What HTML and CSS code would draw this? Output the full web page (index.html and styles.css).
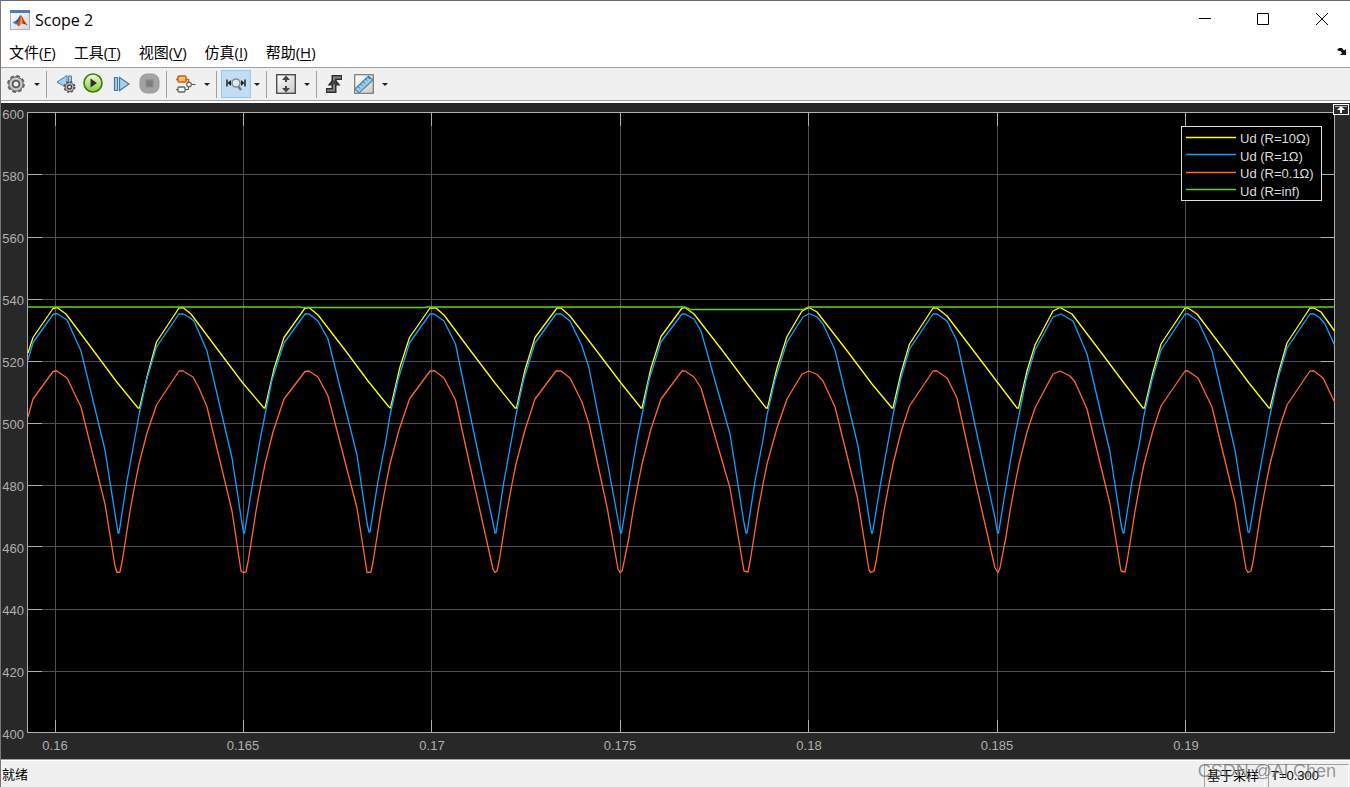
FILE: index.html
```html
<!DOCTYPE html>
<html lang="zh-CN">
<head>
<meta charset="utf-8">
<title>Scope 2</title>
<link rel="stylesheet" href="styles.css">
</head>
<body>
<div class="window">
  <header class="titlebar">
    <svg class="app-icon" width="20" height="20" viewBox="0 0 20 20" aria-hidden="true">
      <defs><linearGradient id="appbg" x1="0" y1="0" x2="1" y2="1"><stop offset="0" stop-color="#fff"/><stop offset="1" stop-color="#d3d6da"/></linearGradient></defs>
      <rect x=".5" y=".5" width="19" height="19" fill="url(#appbg)" stroke="#a9b2bc"/>
      <rect width="20" height="3" fill="#4d7fb0"/>
      <path d="M2.500 12.500L6 10.500 8.500 12 6 14.500z" fill="#3f82bd"/>
      <path d="M6 10.500C8 9.800 9 6 10.500 5L11 12 8.500 15 6.500 14z" fill="#355f94"/>
      <path d="M10.500 5C9.800 9 9 12 6.500 14.500L9 16.500C10.500 15 11 13.500 12 13.500L17.500 15C14 12 13 6 10.500 5z" fill="#d9541c"/>
      <path d="M11 6C11 10 10.500 13 9 15.500 10.500 14 11 13 12 13.200 12.500 11 12 8 11 6z" fill="#f6a13a"/>
      <path d="M11.300 5.500C13 9 13.500 12 17.500 15L13.500 13.600C13 11 12.500 8 11.300 5.500z" fill="#9c2d16"/>
    </svg>
    <h1 class="title">Scope 2</h1>
    <div class="controls">
      <button class="control" aria-label="最小化"><svg width="14" height="14" viewBox="0 0 14 14"><path d="M1 5.500H13"/></svg></button>
      <button class="control" aria-label="最大化"><svg width="14" height="14" viewBox="0 0 14 14"><path d="M1.500 .5H12.500V11.500H1.500z"/></svg></button>
      <button class="control" aria-label="关闭"><svg width="14" height="14" viewBox="0 0 14 14"><path d="M2 0L14 12M14 0L2 12"/></svg></button>
    </div>
  </header>

  <nav class="menubar">
    <button class="menu">文件(<u>F</u>)</button>
    <button class="menu">工具(<u>T</u>)</button>
    <button class="menu">视图(<u>V</u>)</button>
    <button class="menu">仿真(<u>I</u>)</button>
    <button class="menu">帮助(<u>H</u>)</button>
    <button class="dock" aria-label="停靠"><svg width="10" height="9" viewBox="0 0 10 9"><path d="M0 3L2 1H5L7 3.500 9 2V8H3L5 6 3.500 4H2z" fill="#111"/></svg></button>
  </nav>

  <div class="toolbar" role="toolbar">
    <button class="tool" aria-label="配置属性"><svg width="20" height="20" viewBox="0 0 20 20">
      <circle cx="10" cy="10" r="7.800" fill="none" stroke="#6a6a6a" stroke-width="2.200" stroke-dasharray="3.600 2.530"/>
      <circle cx="10" cy="10" r="7.200" fill="#b4b4b4" stroke="#5c5c5c"/>
      <circle cx="10" cy="10" r="5.500" fill="none" stroke="#d8d8d8"/>
      <circle cx="10" cy="10" r="3.300" fill="#eee" stroke="#505050" stroke-width="1.600"/></svg></button>
    <button class="caret" aria-label="配置选项"></button>
    <span class="sep"></span>
    <button class="tool" aria-label="单步后退"><svg width="20" height="20" viewBox="0 0 20 20">
      <path d="M1 8L11 1.500V14z" fill="#a8cfe9" stroke="#4f80a4"/><path d="M12.500 2H15.500V9H12.500z" fill="#a8cfe9" stroke="#4f80a4"/>
      <circle cx="13.500" cy="13" r="5" fill="none" stroke="#555" stroke-width="2" stroke-dasharray="2.200 1.727"/>
      <circle cx="13.500" cy="13" r="4.500" fill="#c2c2c2" stroke="#555"/><circle cx="13.500" cy="13" r="2" fill="#eee" stroke="#444" stroke-width="1.400"/></svg></button>
    <button class="tool" aria-label="运行"><svg width="22" height="22" viewBox="0 0 22 22">
      <defs><linearGradient id="run" x1="0" y1="0" x2="0" y2="1"><stop offset="0" stop-color="#f4fbd7"/><stop offset="1" stop-color="#8bcb36"/></linearGradient></defs>
      <circle cx="10" cy="10" r="9" fill="url(#run)" stroke="#3f7a1c" stroke-width="1.700"/><path d="M7.500 5.500L14 10 7.500 14.500z" fill="#303030"/></svg></button>
    <button class="tool" aria-label="单步前进"><svg width="20" height="20" viewBox="0 0 20 20">
      <path d="M2.500 3.500H5.500V16.500H2.500zM7.500 3.500L17 10 7.500 16.500z" fill="#a8cfe9" stroke="#4679a3" stroke-width="1.200"/></svg></button>
    <button class="tool" aria-label="停止" disabled><svg width="22" height="22" viewBox="0 0 22 22">
      <rect x="1" y="1" width="19" height="19" rx="7" fill="#a3a3a3" stroke="#999"/><rect x="7" y="7" width="7" height="7" fill="#7d7d7d" stroke="#8d8d8d"/></svg></button>
    <span class="sep"></span>
    <button class="tool" aria-label="信号选择"><svg width="22" height="20" viewBox="0 0 22 20">
      <path d="M1 15.500H13.500V12M16 10.500H20.500" fill="none" stroke="#555"/>
      <path d="M1 5.500H13.500V9" fill="none" stroke="#d95b16" stroke-width="1.500"/>
      <rect x="3" y="2" width="8" height="6" rx="1" fill="#ffc46b" stroke="#d95b16" stroke-width="1.500"/>
      <rect x="3" y="13" width="7" height="5" rx="1" fill="#f4f4f4" stroke="#666" stroke-width="1.300"/>
      <circle cx="14" cy="10.500" r="2.300" fill="#f2f2f2" stroke="#666" stroke-width="1.200"/></svg></button>
    <button class="caret" aria-label="信号选项"></button>
    <span class="sep"></span>
    <button class="tool tool-active" aria-label="缩放 X" aria-pressed="true"><svg width="22" height="20" viewBox="0 0 22 20">
      <path d="M2 5.500V12.500M20 5.500V12.500" stroke="#222" stroke-width="1.500"/><path d="M2.500 9L6 6V12zM19.500 9L16 6V12z" fill="#222"/>
      <path d="M13 12L16 16" stroke="#777" stroke-width="2.400"/><circle cx="11" cy="9" r="4" fill="#d9ecf8" stroke="#8b8b8b" stroke-width="1.600"/></svg></button>
    <button class="caret" aria-label="缩放选项"></button>
    <span class="sep"></span>
    <button class="tool" aria-label="缩放 Y 轴范围"><svg width="20" height="20" viewBox="0 0 20 20">
      <defs><linearGradient id="box" x1="0" y1="0" x2="1" y2="1"><stop offset="0" stop-color="#fff"/><stop offset="1" stop-color="#c9c9c9"/></linearGradient></defs>
      <rect x=".7" y=".7" width="18.600" height="18.600" fill="url(#box)" stroke="#4d4d4d" stroke-width="1.400"/>
      <path d="M10 1.500L14 6H11V8H9V6H6zM10 18.500L6 14H9V12H11V14H14z" fill="#444"/></svg></button>
    <button class="caret" aria-label="范围选项"></button>
    <span class="sep"></span>
    <button class="tool" aria-label="触发器"><svg width="20" height="20" viewBox="0 0 20 20">
      <path d="M0 16.500H8V3.500H16" fill="none" stroke="#2c2c2c" stroke-width="5"/>
      <path d="M8 3.500L14.500 11.500H1.500z" fill="#2c2c2c"/>
      <path d="M1 16.500H8V3.500H15" fill="none" stroke="#858585" stroke-width="2"/>
      <path d="M8 6L12 10.500H4z" fill="#444"/></svg></button>
    <button class="tool" aria-label="游标测量"><svg width="20" height="20" viewBox="0 0 20 20">
      <rect x=".7" y=".7" width="18.600" height="18.600" fill="url(#box)" stroke="#777" stroke-width="1.200"/>
      <path d="M1 15L14.500 2 19 6 5 19z" fill="#9bcbe8" stroke="#4f86aa" stroke-width="1.200"/>
      <path d="M4 12.500L6 14.500M6.500 10L8 11.500M9 7.500L11 9.500M11.500 5L13 6.500M14 3L16 5" stroke="#2f6185"/></svg></button>
    <button class="caret" aria-label="测量选项"></button>
  </div>

  <main class="scope">
    <svg class="plot" viewBox="1 103 1349 656" role="img" aria-label="Ud">
      <rect x="27.500" y="112.500" width="1307" height="620" class="axes"/>
      <path class="grid" d="M28 174.500H1334M28 237.500H1334M28 299.500H1334M28 361.500H1334M28 423.500H1334M28 485.500H1334M28 546.500H1334M28 609.500H1334M28 671.500H1334M55.500 113V732M243.500 113V732M431.500 113V732M620.500 113V732M808.500 113V732M997.500 113V732M1185.500 113V732"/>
      <path class="ticks" d="M28 174.500H42M28 237.500H42M28 299.500H42M28 361.500H42M28 423.500H42M28 485.500H42M28 546.500H42M28 609.500H42M28 671.500H42M1321 174.500H1334M1321 237.500H1334M1321 299.500H1334M1321 361.500H1334M1321 423.500H1334M1321 485.500H1334M1321 546.500H1334M1321 609.500H1334M1321 671.500H1334M55.500 113V126M243.500 113V126M431.500 113V126M620.500 113V126M808.500 113V126M997.500 113V126M1185.500 113V126M55.500 720V732M243.500 720V732M431.500 720V732M620.500 720V732M808.500 720V732M997.500 720V732M1185.500 720V732"/>
      <g class="y-labels">
        <text x="24" y="119">600</text><text x="24" y="181">580</text><text x="24" y="243">560</text><text x="24" y="305">540</text><text x="24" y="367">520</text><text x="24" y="429">500</text><text x="24" y="491">480</text><text x="24" y="553">460</text><text x="24" y="615">440</text><text x="24" y="677">420</text><text x="24" y="739">400</text>
      </g>
      <g class="x-labels">
        <text x="55" y="750">0.16</text><text x="243" y="750">0.165</text><text x="432" y="750">0.17</text><text x="620" y="750">0.175</text><text x="809" y="750">0.18</text><text x="997" y="750">0.185</text><text x="1186" y="750">0.19</text>
      </g>
      <polyline class="trace yellow" points="28,353 33,337.500 53,308.500 57,307.500 66,314 93,350 116,381 138,408 139.500,408 148,373 156.500,342 179,308 183,307.500 191,314 218,350 242,382 264,408 265,408 274,369 284,337.500 305,308 309,307.500 318,315 345,350 368,381 389,407 390.500,408 400,367 409.500,337.500 430,308 436,308 444,315 470,350 495,383 515,408 516.500,408 525,370 535,337.500 557,308 561,308 570,316 596,350 621,383 641,408 642,408 651,368 661,336.500 682,308 685,307.500 694,314 722,350 746,382 766,408 767.500,408 777,368 787,336.500 802,311 809,307.500 817,312 848,352 872,384 892,408 893,408 901,373 909.500,344 933,308 937,308 947,316 973,350 998,383 1017,408 1018.500,408 1027,371 1035,345 1053,311 1060,307.500 1072,314 1100,351 1124,383 1143,408 1144.500,408 1153,372 1161,344 1185,308 1188,308 1197,314 1225,351 1249,383 1269,408 1270,408 1279,371 1287,343 1310,308 1314,308 1321,312 1334.500,331"/>
      <polyline class="trace blue" points="28,360 33,342.500 53,314.500 57,313.500 67,320 81,351 105,450 118,533 119,533 127,481 134.500,440 139,415 146.500,380 156.500,347 179,314 183,314 189,317 194,321 207,351 232,458 243.500,533 244.500,533 253,481 260,440 265,415 272,380 284,343 305,314 309,314 318,321 328,339 357,455 367,523 369,532 370,532 378,481 386,440 390,415 398,380 409.500,343 430,314 434,314 444,321 455.500,344 475,438 493,523 495,533 496,533 504,481 511.500,440 516,415 523.500,380 535,343 556,314 561,314 570,321 582,346 589,368 607,460 619,525 620.500,533 621.500,533 630,481 637,440 642,415 649,380 661,342 682,314 685,314 694,319 701,331 730,434 744,523 746,533 747,533 755,481 763,440 767,415 775,380 787,342 803,317 809,313.500 817,317 823,324 835,350 858,446 870,524 871.500,533 872.500,533 881,481 888.500,440 893,415 900.500,380 909.500,349 933,314 937,314 947,321 957,341 975,425 995,518 997.500,533 998.500,533 1007,481 1014,440 1019,415 1026,380 1035,350 1053,317 1061,314 1073,321 1087,354 1110,452 1121,524 1123,533 1124,533 1132,481 1140,440 1144,415 1152,380 1161,350 1185,314 1188,314 1198,321 1212,351 1235,450 1248,532 1249.500,532 1258,481 1265.500,440 1270,415 1277.500,380 1287,348 1310,314 1314,314 1320,318 1325,324 1334.500,345"/>
      <polyline class="trace red" points="28,417 33,399 53,371.500 57,371 67,378 81,407 105,504 115,566 117,572.500 120,572 122,562 126,537 130,511 135,484 139,464 147,433 156.500,405 179,371 183,371 193,377 199,388 207,407 232,511 241,571 243,572.500 246,572 248,562 252,537 256,511 261,484 265,464 273,432 284,399 305,371.500 309,371 318,377 328,396 357,508 367,572.500 371,572 373,562 377,537 381,511 386,484 390,464 399,430 409.500,399 430,371 435,371 444,378 455.500,400 472,475 493,569 495,572.500 497,571 499,562 503,537 507,511 512,484 516,464 525,430 535,399 556,371 561,371 570,378 582,402 589,424 607,507 618,569 620,572.500 622,571 624,562 629,537 633,511 638,484 642,464 651,429 661,399 682,371 685,371 694,377 701,388 730,488 744,571 748,572 750,562 754,537 758,511 763,484 767,464 777,428 787,399 802,374 809,371 817,374.500 823,381 835,407 857.500,498 869,570 871,572.500 874,571 876,562 880,537 884,511 889,484 893,464 901,432 909.500,406 933,371 937,371 947,378 957,398 975,480 995,568 998,572.500 1000,568 1002,557 1006,537 1010,511 1015,484 1019,464 1027,432 1035,408 1053,374 1060,371 1070,376 1075,382 1087,409 1110,504 1121,571 1125,572 1127,562 1131,537 1135,511 1140,484 1144,464 1153,430 1161,406 1185,371 1188,371 1198,378 1212,407 1235,502 1246,569 1248,572.500 1251,571 1253,562 1257,537 1261,511 1266,484 1270,464 1279,429 1287,405 1310,371 1314,371 1323,378 1334.500,402"/>
      <polyline class="trace green" points="28,307 300,307 302,307.500 425,307.500 427,307 685,307 691,309.500 803,309.500 808,307 1334.500,307"/>
      <rect x="1181.500" y="126.500" width="140" height="74" class="legend-box"/>
      <g class="trace"><path class="yellow" d="M1186 137.500H1236"/><path class="blue" d="M1186 154.500H1236"/><path class="red" d="M1186 172.500H1236"/><path class="green" d="M1186 189.500H1236"/></g>
      <g class="legend-text"><text x="1240" y="143">Ud (R=10Ω)</text><text x="1240" y="161">Ud (R=1Ω)</text><text x="1240" y="178">Ud (R=0.1Ω)</text><text x="1240" y="196">Ud (R=inf)</text></g>
      <rect x="1333.500" y="104.500" width="15" height="10" fill="#2b2b2b" stroke="#fff"/>
      <path d="M1335 106.500H1347" stroke="#aaa"/><path d="M1341 106L1345 110H1342V113H1340V110H1337z" fill="#fff"/>
    </svg>
  </main>

  <footer class="statusbar">
    <span class="state">就绪</span>
    <span class="cell cell-mode">基于采样</span>
    <span class="cell cell-time">T=0.300</span>
    <span class="watermark">CSDN @Al Chen</span>
  </footer>
</div>
</body>
</html>
```
FILE: styles.css
```css
* { box-sizing: border-box; }

body {
  margin: 0;
  background: #f0f0f0;
  color: #000;
  font-family: "Noto Sans", "Noto Sans CJK SC", sans-serif;
}

button {
  margin: 0;
  padding: 0;
  border: 0;
  background: none;
  color: inherit;
  font: inherit;
}

svg { display: block; }

.window {
  display: flex;
  flex-direction: column;
  min-height: 100vh;
  border-top: 1px solid #686868;
  border-left: 1px solid #777;
}

.titlebar {
  display: flex;
  align-items: center;
  height: 37px;
  padding-left: 9px;
  background: #fff;
}

.title {
  margin: 0 0 0 5px;
  font-family: "Open Sans", sans-serif;
  font-size: 16px;
  font-weight: 400;
  line-height: 20px;
}

.controls { display: flex; margin-left: auto; }

.control {
  display: grid;
  place-items: center;
  width: 58px;
  height: 36px;
}

.control svg { fill: none; stroke: #000; }

.menubar {
  display: flex;
  align-items: center;
  gap: 18px;
  height: 29px;
  padding: 0 3px 2px 8px;
  background: #fff;
}

.menu {
  font-family: "Open Sans", "Noto Sans CJK SC", sans-serif;
  font-size: 15px;
  line-height: 20px;
}

.menu u { text-underline-offset: 2px; }

.dock { margin-left: auto; }

.toolbar {
  display: flex;
  align-items: center;
  height: 34px;
  padding-left: 1px;
  border-top: 1px solid #a0a0a0;
  border-bottom: 1px solid #a0a0a0;
  background: #f0f0f0;
}

.tool {
  display: grid;
  place-items: center;
  width: 28px;
  height: 26px;
}

.tool-active {
  background: #c2ddf3;
  outline: 1px solid #90c8f6;
}

.caret {
  display: grid;
  place-items: center;
  width: 14px;
  height: 28px;
}

.caret::before {
  content: "";
  border: 3px solid transparent;
  border-top-color: #222;
  border-bottom: 0;
}

.sep {
  width: 1px;
  height: 27px;
  margin: 0 5px 0 2px;
  background: #a0a0a0;
}

.scope {
  border-top: 2px solid #fff;
  background: #282828;
}

.plot {
  width: 100%;
  height: auto;
  font-family: "Liberation Sans", sans-serif;
  font-size: 13px;
}

.axes { fill: #000; stroke: #afafaf; }
.grid { fill: none; stroke: #505050; }
.ticks { fill: none; stroke: #afafaf; }
.x-labels, .y-labels { fill: #afafaf; }
.x-labels { text-anchor: middle; }
.y-labels { text-anchor: end; }
.trace { fill: none; stroke-width: 1.3; stroke-linejoin: round; }
.yellow { stroke: #ffff11; }
.blue { stroke: #139fff; }
.red { stroke: #ff6929; }
.green { stroke: #64d413; }
.legend-box { fill: #000; stroke: #e0e0e0; }
.legend-text { fill: #dcdcdc; }

.statusbar {
  position: relative;
  display: flex;
  flex: 1;
  align-items: flex-start;
  gap: 3px;
  min-height: 28px;
  padding: 4px 1px 0 1px;
  border-top: 1px solid #a0a0a0;
  box-shadow: inset 0 1px #fff;
  font-family: "Liberation Sans", "Noto Sans CJK SC", sans-serif;
  font-size: 13px;
  line-height: 22px;
}

.state { margin-right: auto; }

.cell {
  padding-left: 2px;
  border: 1px solid #a0a0a0;
  border-right-color: #fff;
  border-bottom: 0;
}

.cell-mode { width: 61px; }
.cell-time { width: 81px; }

.watermark {
  position: absolute;
  right: 14px;
  top: 0;
  color: rgba(110, 110, 110, 0.7);
  font-size: 18px;
}
```
